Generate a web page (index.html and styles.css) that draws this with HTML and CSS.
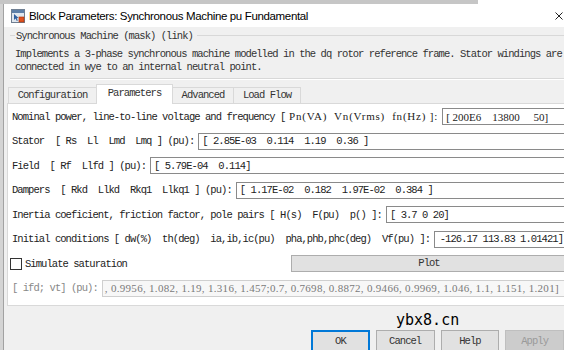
FILE: index.html
```html
<!DOCTYPE html>
<html lang="en">

	<head>
		<meta charset="UTF-8">
		<title>Block Parameters: Synchronous Machine pu Fundamental</title>
		<link rel="stylesheet" href="styles.css">
	</head>

	<body>
		<div class="strip"></div>
		<div class="win">
			<div class="titlebar">
				<svg class="appicon" width="14" height="14" viewBox="0 0 14 14">
					<rect x="0.5" y="0.5" width="13" height="13" fill="#dfe6ee" stroke="#6f7f92"/>
					<rect x="1" y="1" width="12" height="3" fill="#5d7fa8"/>
					<path d="M3 5 L3 11 L4.6 9.6 L5.8 12 L6.8 11.5 L5.7 9.2 L7.6 9.1 Z" fill="#2f5f9e"/>
					<rect x="8" y="8" width="5" height="5" fill="#e0521f" stroke="#a8330d" stroke-width="0.6"/>
				</svg>
				<span class="title">Block Parameters: Synchronous Machine pu Fundamental</span>
				<svg class="close" width="8" height="8" viewBox="0 0 8 8">
					<path d="M0.5 0.5 L7.5 7.5 M7.5 0.5 L0.5 7.5" stroke="#222" stroke-width="1" fill="none"/>
				</svg>
			</div>

			<div class="dlg">
				<div class="group">
					<div class="group-label"><span>Synchronous Machine (mask) (link)</span></div>
					<p class="desc">Implements a 3-phase synchronous machine modelled in the dq rotor reference frame. Stator windings are
connected in wye to an internal neutral point.</p>
				</div>

				<div class="tabs">
					<span class="tab t-conf">Configuration</span>
					<span class="tab t-par active">Parameters</span>
					<span class="tab t-adv">Advanced</span>
					<span class="tab t-lf">Load Flow</span>
				</div>

				<div class="panel">
					<div class="row">
						<span class="lbl">Nominal power, line-to-line voltage and frequency [<span class="ser wide"> Pn(VA)  Vn(Vrms)  fn(Hz) ]:</span></span>
						<div class="inp ser">[ 200E6    13800     50]</div>
					</div>
					<div class="row">
						<span class="lbl">Stator  [ Rs  Ll  Lmd  Lmq ] (pu):</span>
						<div class="inp">[ 2.85E-03  0.114  1.19  0.36 ]</div>
					</div>
					<div class="row">
						<span class="lbl">Field  [ Rf  Llfd ] (pu):</span>
						<div class="inp">[ 5.79E-04  0.114]</div>
					</div>
					<div class="row">
						<span class="lbl">Dampers  [ Rkd  Llkd  Rkq1  Llkq1 ] (pu):</span>
						<div class="inp">[ 1.17E-02  0.182  1.97E-02  0.384 ]</div>
					</div>
					<div class="row">
						<span class="lbl">Inertia coeficient, friction factor, pole pairs [ H(s)  F(pu)  p() ]:</span>
						<div class="inp">[ 3.7 0 20]</div>
					</div>
					<div class="row">
						<span class="lbl">Initial conditions [ dw(%)  th(deg)  ia,ib,ic(pu)  pha,phb,phc(deg)  Vf(pu) ]:</span>
						<div class="inp scroll">-126.17 113.83 1.01421]</div>
					</div>
					<div class="row">
						<span class="check"></span>
						<span class="lbl">Simulate saturation</span>
						<span class="plot">Plot</span>
					</div>
					<div class="row">
						<span class="lbl dim">[ ifd; vt] (pu):</span>
						<div class="inp off"><span class="ser">, 0.9956, 1.082, 1.19, 1.316, 1.457;0.7, 0.7698, 0.8872, 0.9466, 0.9969, 1.046, 1.1, 1.151, 1.201]</span></div>
					</div>
				</div>

				<div class="buttons">
					<span class="btn ok">OK</span>
					<span class="btn">Cancel</span>
					<span class="btn">Help</span>
					<span class="btn disabled">Apply</span>
				</div>
			</div>
		</div>
		<div class="mark">ybx8.cn</div>
	</body>

</html>
```

FILE: styles.css
```css
body {
	margin: 0;
	width: 575px;
	height: 350px;
	overflow: hidden;
	position: relative;
	background: #fff;
	color: #222;
	font-family: "Liberation Mono", monospace;
	font-size: 10.5px;
	letter-spacing: -0.94px;
}

.strip {
	width: 478px;
	height: 4px;
	background: #c6c6c6;
}

.win {
	width: 560px;
	border-left: 3px solid #d4d4d4;
	box-shadow: inset 1px 0 #a2a2a2;
	padding-left: 1px;
}

.titlebar {
	height: 23px;
	display: flex;
	align-items: center;
	padding-left: 7px;
	background: #fff;
}

.appicon {
	flex: none;
}

.title {
	margin-left: 4px;
	font-family: "Liberation Sans", sans-serif;
	font-size: 11.5px;
	letter-spacing: -0.35px;
	color: #000;
}

.close {
	margin-left: auto;
	margin-right: 1px;
}

.dlg {
	height: 323px;
	background: #f0f0f0;
	overflow: hidden;
	padding-top: 2px;
	box-sizing: border-box;
}

.group {
	margin-left: 6px;
	border-bottom: 1px solid #d8d8d8;
	box-shadow: 0 1px #fff;
	padding-bottom: 4px;
}

.group-label {
	display: flex;
	align-items: center;
	height: 13px;
	color: #333;
}

.group-label::before,
.group-label::after {
	content: "";
	border-top: 1px solid #d8d8d8;
}

.group-label::before {
	width: 5px;
	margin-right: 1px;
}

.group-label::after {
	flex: 1;
	margin-left: 4px;
}

.desc {
	margin: 6px 0 0 5px;
	line-height: 13px;
	white-space: pre;
	color: #333;
}

.tabs {
	display: flex;
	align-items: flex-end;
	height: 19px;
	margin: 5px 0 0 4px;
}

.tab {
	height: 16px;
	box-sizing: border-box;
	border: 1px solid #d9d9d9;
	border-bottom: none;
	margin-right: -1px;
	text-align: center;
	line-height: 15px;
	background: #f0f0f0;
	color: #333;
}

.tab.active {
	height: 20px;
	margin-bottom: -1px;
	background: #fff;
	position: relative;
	z-index: 1;
	line-height: 17px;
}

.t-conf { width: 89px; }
.t-par { width: 77px; }
.t-adv { width: 62px; }
.t-lf { width: 68px; }

.panel {
	margin: 0 -4px 0 3px;
	border: 1px solid #d9d9d9;
	background: #fff;
	padding: 4px 0 8.5px 4px;
	display: flex;
	flex-direction: column;
	gap: 7.5px;
}

.row {
	display: flex;
	align-items: center;
	height: 17px;
}

.lbl {
	white-space: pre;
	margin-right: 4px;
}

.ser {
	font-family: "Liberation Serif", serif;
	font-size: 11px;
	letter-spacing: 0;
}

.ser.wide {
	letter-spacing: 0.8px;
}

.inp {
	flex: 1;
	height: 17px;
	box-sizing: border-box;
	border: 1px solid #8a8a8a;
	padding: 0 3px;
	display: flex;
	align-items: center;
	white-space: pre;
	overflow: hidden;
	color: #222;
}

.inp.scroll {
	justify-content: flex-end;
}

.inp.off {
	border-color: #cfcfcf;
	background: #f7f7f7;
	color: #7a7a7a;
	padding-left: 2px;
}

.inp.off .ser {
	letter-spacing: 0.3px;
}

.dim {
	color: #888;
}

.check {
	width: 12px;
	height: 12px;
	box-sizing: border-box;
	border: 1px solid #333;
	background: #fff;
	margin: 0 3px 0 -2px;
}

.plot {
	margin-left: auto;
	width: 276px;
	height: 17px;
	box-sizing: border-box;
	border: 1px solid #adadad;
	background: #e1e1e1;
	text-align: center;
	line-height: 15px;
	color: #333;
}

.buttons {
	display: flex;
	gap: 6px;
	margin: 24px 0 0 307px;
}

.btn {
	width: 60px;
	height: 22px;
	box-sizing: border-box;
	border: 1px solid #adadad;
	background: #e1e1e1;
	text-align: center;
	line-height: 20px;
	color: #333;
}

.btn.ok {
	border: 2px solid #0078d7;
	line-height: 18px;
}

.btn.disabled {
	border-color: #bfbfbf;
	background: #cccccc;
	color: #9a9a9a;
}

.mark {
	position: absolute;
	left: 396px;
	top: 311px;
	font-family: "DejaVu Sans Mono", monospace;
	font-size: 15px;
	letter-spacing: 0;
	color: #000;
}
```
